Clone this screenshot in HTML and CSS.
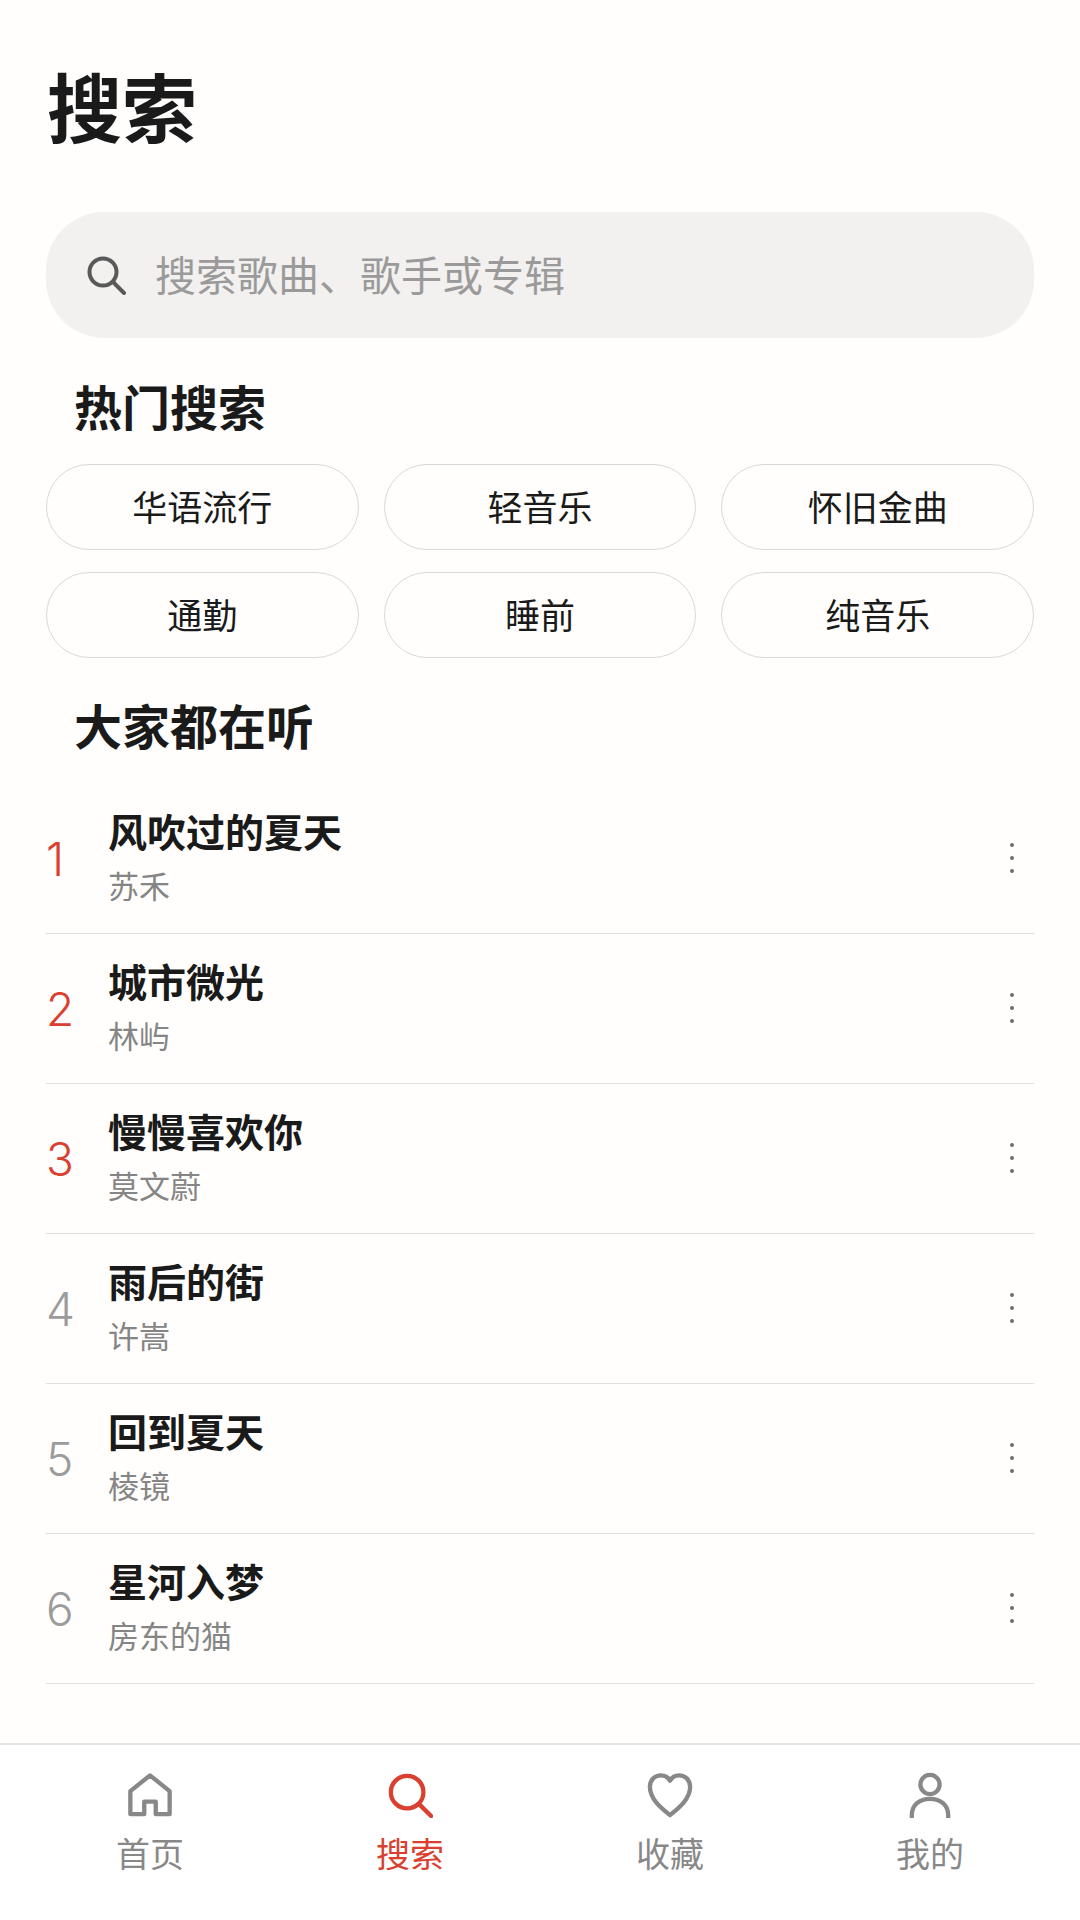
FILE: index.html
```html
<!DOCTYPE html>
<html lang="zh-CN">
<head>
    <meta charset="UTF-8">
    <meta name="viewport" content="width=device-width, initial-scale=1">
    <title>搜索</title>
    <link rel="stylesheet" href="styles.css">
</head>
<body>
    <main class="content">
        <h1 class="page-title">搜索</h1>

        <div class="search-bar">
            <svg class="search-icon" viewBox="0 0 40 40"><circle cx="17" cy="17" r="13.5"/><path d="M27 27l11 11"/></svg>
            <span class="search-hint">搜索歌曲、歌手或专辑</span>
        </div>

        <h2 class="section-title">热门搜索</h2>
        <div class="chips">
            <a href="#" class="chip">华语流行</a>
            <a href="#" class="chip">轻音乐</a>
            <a href="#" class="chip">怀旧金曲</a>
            <a href="#" class="chip">通勤</a>
            <a href="#" class="chip">睡前</a>
            <a href="#" class="chip">纯音乐</a>
        </div>

        <h2 class="section-title section-title-list">大家都在听</h2>
        <ul class="songs">
            <li class="song">
                <span class="rank rank-top">1</span>
                <div class="song-info"><p class="song-name">风吹过的夏天</p><p class="song-artist">苏禾</p></div>
                <div class="more"><i></i><i></i><i></i></div>
            </li>
            <li class="song">
                <span class="rank rank-top">2</span>
                <div class="song-info"><p class="song-name">城市微光</p><p class="song-artist">林屿</p></div>
                <div class="more"><i></i><i></i><i></i></div>
            </li>
            <li class="song">
                <span class="rank rank-top">3</span>
                <div class="song-info"><p class="song-name">慢慢喜欢你</p><p class="song-artist">莫文蔚</p></div>
                <div class="more"><i></i><i></i><i></i></div>
            </li>
            <li class="song">
                <span class="rank">4</span>
                <div class="song-info"><p class="song-name">雨后的街</p><p class="song-artist">许嵩</p></div>
                <div class="more"><i></i><i></i><i></i></div>
            </li>
            <li class="song">
                <span class="rank">5</span>
                <div class="song-info"><p class="song-name">回到夏天</p><p class="song-artist">棱镜</p></div>
                <div class="more"><i></i><i></i><i></i></div>
            </li>
            <li class="song">
                <span class="rank">6</span>
                <div class="song-info"><p class="song-name">星河入梦</p><p class="song-artist">房东的猫</p></div>
                <div class="more"><i></i><i></i><i></i></div>
            </li>
        </ul>
    </main>

    <nav class="tabbar">
        <a href="#" class="tab">
            <svg viewBox="0 0 48 48"><path d="M24 3.5L44.5 20V44H30V31H18V44H3.5V20Z"/></svg>
            <span>首页</span>
        </a>
        <a href="#" class="tab tab-active">
            <svg viewBox="0 0 48 48"><circle cx="21" cy="21" r="17"/><path d="M33.5 33.5L46 46"/></svg>
            <span>搜索</span>
        </a>
        <a href="#" class="tab">
            <svg viewBox="0 0 48 48"><path d="M24 45C14 37 3 28 3 15.500C3 8 8.500 3.500 14.500 3.500C18.500 3.500 22 5.500 24 9C26 5.500 29.500 3.500 33.500 3.500C39.500 3.500 45 8 45 15.500C45 28 34 37 24 45Z"/></svg>
            <span>收藏</span>
        </a>
        <a href="#" class="tab">
            <svg viewBox="0 0 48 48"><circle cx="24" cy="13" r="10"/><path d="M5 47V45C5 34.500 13 28 24 28C35 28 43 34.500 43 45V47"/></svg>
            <span>我的</span>
        </a>
    </nav>
</body>
</html>
```

FILE: styles.css
```css
*{
    margin: 0;
    padding: 0;
    box-sizing: border-box;
}

body{
    width: 1080px;
    height: 1920px;
    display: flex;
    flex-direction: column;
    background-color: #fffefc;
    color: #1a1a1a;
    font-family: "Noto Sans CJK SC", "Noto Sans", sans-serif;
    overflow: hidden;
}

a{
    text-decoration: none;
    color: inherit;
}

.content{
    flex: 1;
    padding: 0 46px;
}

.page-title{
    font-size: 75px;
    line-height: 100px;
    font-weight: 700;
    margin: 55px 0 0 1px;
}

.search-bar{
    display: flex;
    align-items: center;
    height: 126px;
    margin-top: 57px;
    padding-left: 40px;
    border-radius: 58px;
    background-color: #f3f1ef;
}

.search-icon{
    width: 40px;
    height: 40px;
    margin-right: 29px;
    fill: none;
    stroke: #595959;
    stroke-width: 4;
    stroke-linecap: round;
}

.search-hint{
    font-size: 41px;
    color: #9a9a9a;
    margin-bottom: 5px;
}

.section-title{
    font-size: 48px;
    line-height: 68px;
    font-weight: 700;
    margin: 33px 0 0 28px;
}

.chips{
    display: grid;
    grid-template-columns: repeat(3, 1fr);
    gap: 22px 25px;
    margin-top: 25px;
}

.chip{
    height: 86px;
    display: flex;
    align-items: center;
    justify-content: center;
    border: 1px solid #d9d9d6;
    border-radius: 43px;
    font-size: 35px;
    padding-bottom: 4px;
}

.section-title-list{
    margin-top: 32px;
}

.songs{
    list-style: none;
    margin-top: 26px;
}

.song{
    height: 150px;
    display: flex;
    align-items: center;
    border-bottom: 1px solid #dfdfdc;
}

.rank{
    width: 62px;
    font-family: Inter, sans-serif;
    font-weight: 300;
    font-size: 46px;
    color: #9b9b9b;
}

.rank-top{
    color: #d9402f;
}

.song-info{
    flex: 1;
    padding-bottom: 8px;
}

.song-name{
    font-size: 39px;
    line-height: 54px;
    font-weight: 700;
}

.song-artist{
    font-size: 31px;
    line-height: 42px;
    margin-top: 7px;
    color: #858585;
}

.more{
    display: flex;
    flex-direction: column;
    gap: 9px;
    margin: 0 20px 2px 0;
}

.more i{
    width: 4px;
    height: 4px;
    border-radius: 50%;
    background-color: #6e6e6e;
}

.tabbar{
    height: 177px;
    display: grid;
    grid-template-columns: repeat(4, 1fr);
    padding: 0 20px;
    border-top: 2px solid #e4e4e2;
    background-color: #fff;
}

.tab{
    display: flex;
    flex-direction: column;
    align-items: center;
    padding-top: 27px;
    color: #888;
}

.tab svg{
    width: 46px;
    height: 46px;
    fill: none;
    stroke: currentColor;
    stroke-width: 4.5;
    stroke-linecap: round;
    stroke-linejoin: round;
}

.tab span{
    font-size: 34px;
    line-height: 48px;
    margin-top: 11px;
}

.tab-active{
    color: #d9402f;
}
```
